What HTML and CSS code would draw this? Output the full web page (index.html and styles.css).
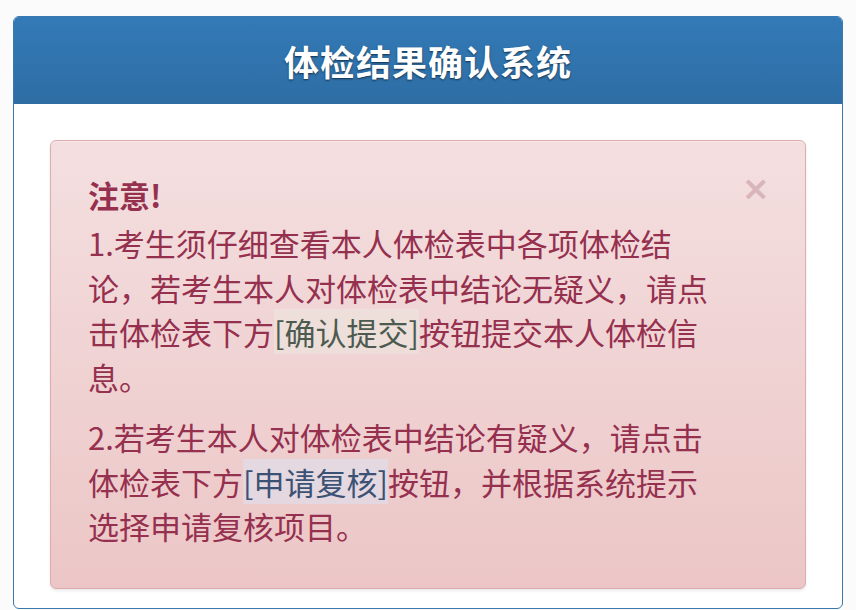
FILE: index.html
```html
<!DOCTYPE html>
<html lang="zh-CN">
<head>
<meta charset="utf-8">
<title>体检结果确认系统</title>
<link rel="stylesheet" href="styles.css">
</head>
<body>
<div class="page">
  <div class="panel">
    <div class="panel-heading">体检结果确认系统</div>
    <div class="panel-body">
      <div class="alert">
        <span class="close">×</span>
        <div class="alert-title">注意!</div>
        <p class="para">1.考生须仔细查看本人体检表中各项体检结论，若考生本人对体检表中结论无疑义，请点击体检表下方<span class="tag tag-confirm">[确认提交]</span>按钮提交本人体检信息。</p>
        <p class="para">2.若考生本人对体检表中结论有疑义，请点击体检表下方<span class="tag tag-review">[申请复核]</span>按钮，并根据系统提示选择申请复核项目。</p>
      </div>
    </div>
  </div>
</div>
</body>
</html>
```
FILE: styles.css
```css
* { box-sizing: border-box; }
html, body { margin: 0; padding: 0; }
body {
  background: #fbfbfc;
  font-family: "Noto Sans CJK SC", "Noto Sans", sans-serif;
  width: 856px;
  height: 610px;
  overflow: hidden;
}
.page {
  padding: 16px 13px 0 13px;
}
.panel {
  border: 1px solid #3a78b0;
  border-radius: 6px;
  background: #ffffff;
  overflow: hidden;
  height: 593px;
}
.panel-heading {
  height: 87px;
  background: linear-gradient(to bottom, #337ab7 0%, #2e6da4 100%);
  color: #ffffff;
  font-size: 35px;
  font-weight: 700;
  line-height: 87px;
  text-align: center;
  letter-spacing: 1px;
  text-shadow: 0 1px 2px rgba(0, 0, 0, 0.6);
}
.panel-body {
  padding: 36px 36px 18px 36px;
}
.alert {
  position: relative;
  border: 1px solid #dcacae;
  border-radius: 6px;
  background: linear-gradient(to bottom, #f4dfe0 0%, #ecc6c6 100%);
  box-shadow: inset 0 1px 0 rgba(255, 255, 255, 0.25), 0 2px 3px rgba(0, 0, 0, 0.08);
  padding: 32px 86px 39px 37px;
  color: #95304f;
  font-size: 31px;
  line-height: 44.5px;
}
.alert-title {
  font-weight: 700;
  line-height: 44px;
  margin-bottom: 4px;
}
.para {
  margin: 0;
}
.para + .para {
  margin-top: 16px;
}
.tag-confirm {
  color: #4c5a50;
  background: rgba(235, 232, 222, 0.55);
}
.tag-review {
  color: #3c5275;
  background: rgba(222, 224, 238, 0.6);
}
.close {
  position: absolute;
  top: 30px;
  right: 35px;
  font-size: 34px;
  line-height: 34px;
  font-family: "DejaVu Sans", sans-serif;
  font-weight: 700;
  color: #d8b5bb;
}
```
